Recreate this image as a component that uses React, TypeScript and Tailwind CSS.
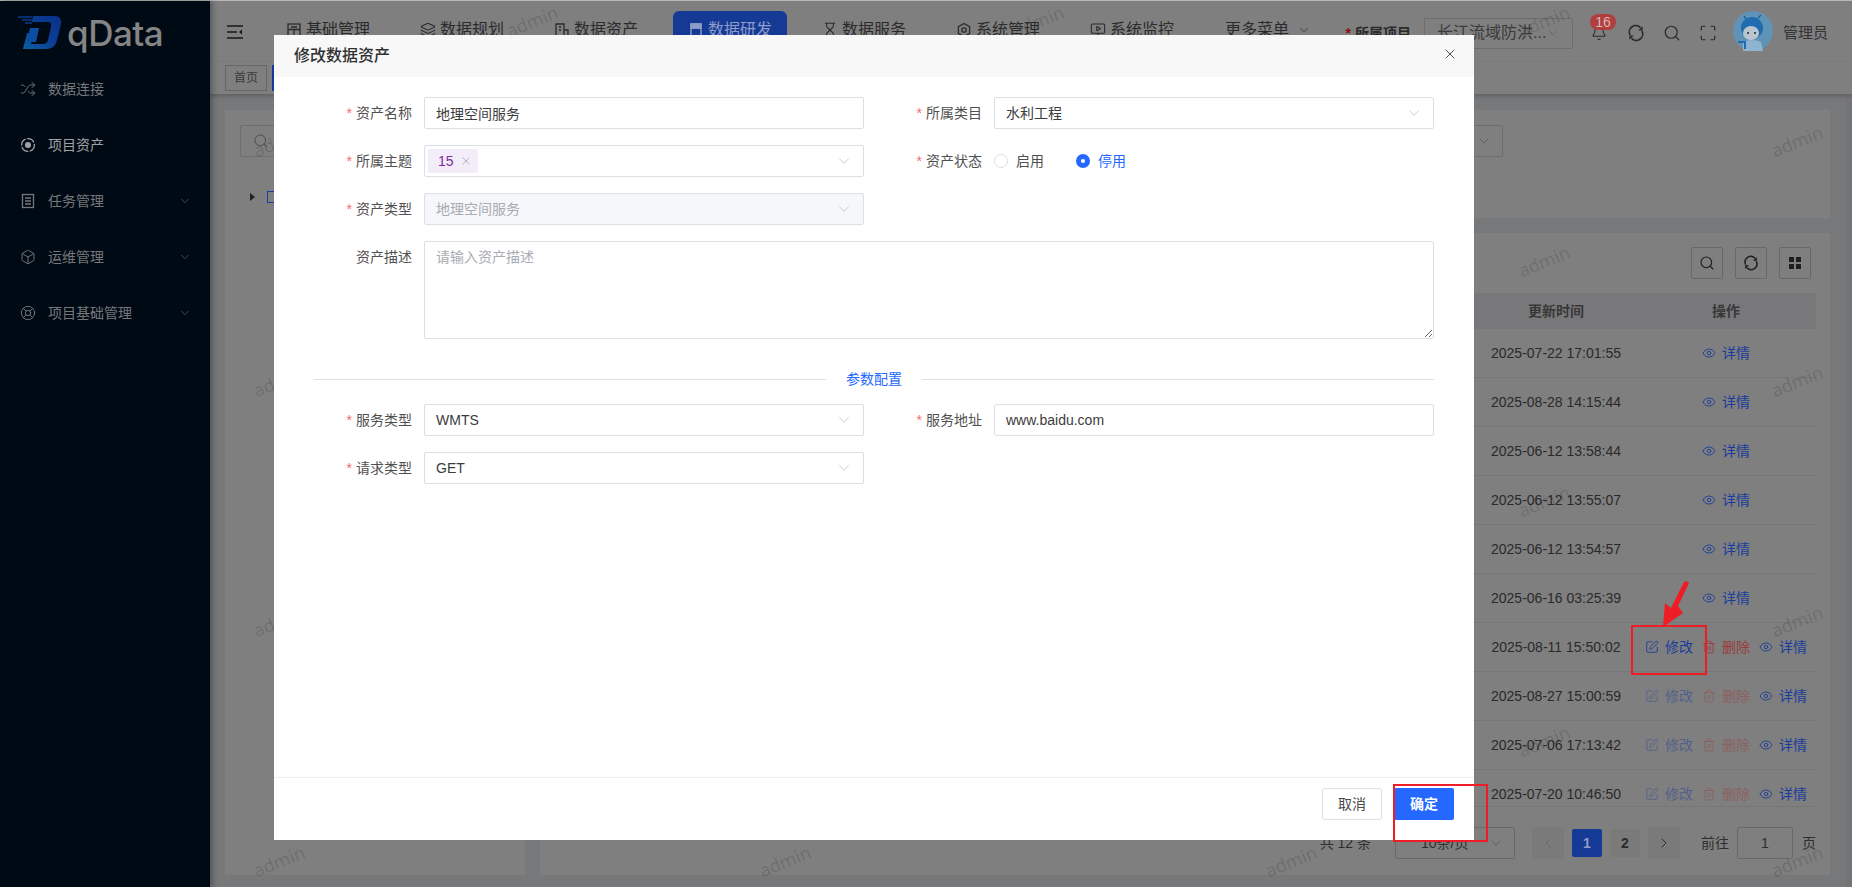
import {
  ChevronDown,
  ChevronLeft,
  ChevronRight,
  Box,
  Eye,
  Hourglass,
  Layers,
  LifeBuoy,
  Maximize,
  MonitorPlay,
  Search,
  Shuffle,
  SquarePen,
  Trash2,
  Bell,
  X,
} from 'lucide-react';

const navItems = ['基础管理', '数据规划', '数据资产', '数据研发', '数据服务', '系统管理', '系统监控'];

const rows = [
  { time: '2025-07-22 17:01:55', mode: 0 },
  { time: '2025-08-28 14:15:44', mode: 0 },
  { time: '2025-06-12 13:58:44', mode: 0 },
  { time: '2025-06-12 13:55:07', mode: 0 },
  { time: '2025-06-12 13:54:57', mode: 0 },
  { time: '2025-06-16 03:25:39', mode: 0 },
  { time: '2025-08-11 15:50:02', mode: 1 },
  { time: '2025-08-27 15:00:59', mode: 2 },
  { time: '2025-07-06 17:13:42', mode: 2 },
  { time: '2025-07-20 10:46:50', mode: 2 },
];

// watermark tile centres, relative to the main area
const marks: { x: number; y: number }[] = [];
for (let r = 0; r < 8; r++) {
  for (let c = 0; c < 4; c++) {
    marks.push({ x: (r % 2 === 0 ? 322 : 69) + c * 506, y: 20 + r * 120 });
  }
}

function NavIcon({ index }: { index: number }) {
  const cls = 'w-4 h-4 shrink-0';
  if (index === 0)
    return (
      <svg viewBox="0 0 16 16" className={cls} fill="none" stroke="currentColor" strokeWidth="1.3">
        <rect x="2" y="2" width="12" height="12" />
        <path d="M2 7.5h12M5 5h6M8 7.5V14" />
      </svg>
    );
  if (index === 1) return <Layers className={cls} strokeWidth={1.6} />;
  if (index === 2)
    return (
      <svg viewBox="0 0 16 16" className={cls} fill="none" stroke="currentColor" strokeWidth="1.3">
        <path d="M2 14V2h8v12M10 8h4v6M1 14h14M5 5h2M5 8h2" />
      </svg>
    );
  if (index === 3)
    return (
      <svg viewBox="0 0 16 16" className={cls} fill="none" stroke="currentColor" strokeWidth="1.4">
        <path d="M3 2h10v12H3zM3 6h10" />
        <path d="M3 2h10v4H3z" fill="currentColor" />
      </svg>
    );
  if (index === 4) return <Hourglass className={cls} strokeWidth={1.6} />;
  if (index === 5)
    return (
      <svg viewBox="0 0 16 16" className={cls} fill="none" stroke="currentColor" strokeWidth="1.3">
        <path d="M8 1.5l5.6 3.2v6.6L8 14.5l-5.6-3.2V4.7z" />
        <circle cx="8" cy="8" r="2.2" />
      </svg>
    );
  return <MonitorPlay className={cls} strokeWidth={1.6} />;
}

function RefreshIcon({ className }: { className: string }) {
  return (
    <svg viewBox="0 0 18 18" className={className} fill="none" stroke="currentColor" strokeWidth="1.7">
      <path d="M3 11A6.5 6.5 0 0 1 13.5 3.6" />
      <path d="M15 7A6.5 6.5 0 0 1 4.5 14.4" />
      <path d="M15.6 2.2v4.4h-4.4z" fill="currentColor" stroke="none" />
      <path d="M2.4 15.8v-4.4h4.4z" fill="currentColor" stroke="none" />
    </svg>
  );
}

function Logo() {
  return (
    <svg viewBox="0 0 46 36" className="w-[46px] h-[36px]">
      <defs>
        <linearGradient id="logoBlue" x1="0" y1="1" x2="1" y2="0">
          <stop offset="0" stopColor="#0c5f9e" />
          <stop offset="0.5" stopColor="#0b3f96" />
          <stop offset="1" stopColor="#0a2f86" />
        </linearGradient>
      </defs>
      <path d="M1 2h14M5 5h11M8 8h7" stroke="#0b3a8e" strokeWidth="1.6" />
      <path
        fill="url(#logoBlue)"
        fillRule="evenodd"
        d="M16 1h22q7 0 6 8l-4 16q-2 9-11 9H6l4-16h7l-3 11h12q4 0 5-4l3-13q1-5-3-5H15z"
      />
      <path d="M13 13h9l-3 14h-9z" fill="#0c4fa0" />
    </svg>
  );
}

function Avatar() {
  return (
    <svg viewBox="0 0 40 40" className="w-10 h-10 shrink-0">
      <circle cx="20" cy="20" r="20" fill="#5f94b8" />
      <path d="M13 8l-2-3M25 7l3-3" stroke="#1d5f9c" strokeWidth="1.4" />
      <circle cx="19" cy="17" r="11" fill="#1f6cb0" />
      <ellipse cx="18" cy="22" rx="8" ry="7" fill="#b9c6d0" />
      <circle cx="15" cy="22" r="1" fill="#222" />
      <circle cx="22" cy="22" r="1" fill="#222" />
      <path d="M10 40v-9q9-4 18 0l2 9z" fill="#8fb4cf" />
      <path d="M5 31h7v7" stroke="#1f6cb0" strokeWidth="2" fill="none" />
    </svg>
  );
}

function ActionBtn({ kind, faded }: { kind: 'edit' | 'del' | 'view'; faded?: boolean }) {
  const color = kind === 'del' ? 'text-[#9a3c3c]' : 'text-[#1a3d9c]';
  return (
    <span className={`flex items-center gap-1.5 ${color} ${faded ? 'opacity-45' : ''}`}>
      {kind === 'edit' && <SquarePen className="w-3.5 h-3.5" strokeWidth={1.5} />}
      {kind === 'del' && <Trash2 className="w-3.5 h-3.5" strokeWidth={1.5} />}
      {kind === 'view' && <Eye className="w-3.5 h-3.5" strokeWidth={1.5} />}
      <span className="text-sm">{kind === 'edit' ? '修改' : kind === 'del' ? '删除' : '详情'}</span>
    </span>
  );
}

function Label({ text, required = true }: { text: string; required?: boolean }) {
  return (
    <label className="w-[110px] shrink-0 pr-3 h-8 flex items-center justify-end text-sm text-[#505050]">
      {required && <span className="mr-1 text-[#f56c6c]">*</span>}
      {text}
    </label>
  );
}

function TextField({ value }: { value: string }) {
  return (
    <input
      readOnly
      value={value}
      className="flex-1 min-w-0 h-8 px-[11px] text-sm text-[#3c3c3c] border border-[#dcdfe6] rounded-[2px] outline-none"
    />
  );
}

function SelectField({ value, disabled }: { value: string; disabled?: boolean }) {
  return (
    <div
      className={`flex-1 min-w-0 h-8 pl-[11px] pr-2.5 flex items-center justify-between text-sm border border-[#dcdfe6] rounded-[2px] ${
        disabled ? 'bg-[#f5f7fa] text-[#a8abb2]' : 'text-[#3c3c3c]'
      }`}
    >
      <span>{value}</span>
      <ChevronDown className="w-[18px] h-[18px] text-[#c0c4cc]" strokeWidth={1.1} />
    </div>
  );
}

export default function App() {
  return (
    <div className="relative w-[1852px] h-[887px] overflow-hidden flex flex-col bg-[#767879] font-['Liberation_Sans','Noto_Sans_CJK_SC',sans-serif]">
      <div className="h-px bg-[#b8b8b8] shrink-0" />
      <div className="flex flex-1 min-h-0">
        {/* Sidebar */}
        <aside className="w-[210px] shrink-0 bg-[#000a14] shadow-[2px_0_6px_rgba(0,0,0,0.35)] z-10">
          <div className="h-[60px] pl-[17px] pt-[14px] flex items-start gap-[4px]">
            <Logo />
            <span className="font-['Inter',sans-serif] font-medium text-[35px] leading-[36px] tracking-[-0.5px] text-[#858585]">
              qData
            </span>
          </div>
          <nav className="text-sm text-[#75787b]">
            {[
              { text: '数据连接', icon: <Shuffle className="w-4 h-4" strokeWidth={1.4} /> },
              {
                text: '项目资产',
                active: true,
                icon: (
                  <svg viewBox="0 0 16 16" className="w-4 h-4" fill="none" stroke="currentColor" strokeWidth="1.3">
                    <circle cx="8" cy="8" r="6.4" strokeDasharray="8 1.5" />
                    <circle cx="8" cy="8" r="2.4" fill="currentColor" />
                  </svg>
                ),
              },
              {
                text: '任务管理',
                arrow: true,
                icon: (
                  <svg viewBox="0 0 16 16" className="w-4 h-4" fill="none" stroke="currentColor" strokeWidth="1.3">
                    <rect x="2.5" y="1.5" width="11" height="13" />
                    <path d="M5 5h6M5 8h6M5 11h6" />
                  </svg>
                ),
              },
              { text: '运维管理', arrow: true, icon: <Box className="w-4 h-4" strokeWidth={1.4} /> },
              { text: '项目基础管理', arrow: true, icon: <LifeBuoy className="w-4 h-4" strokeWidth={1.4} /> },
            ].map((item) => (
              <div
                key={item.text}
                className={`h-14 pl-5 pr-[18px] flex items-center ${item.active ? 'text-[#a0a2a5]' : ''}`}
              >
                <span className="w-7 shrink-0">{item.icon}</span>
                <span className="flex-1">{item.text}</span>
                {item.arrow && <ChevronDown className="w-3.5 h-3.5 text-[#54585c]" strokeWidth={1.4} />}
              </div>
            ))}
          </nav>
        </aside>

        {/* Main */}
        <div className="relative flex-1 min-w-0 flex flex-col">
          <header className="h-[61px] shrink-0 bg-[#7f7f7f] pl-[17px] pr-6 flex items-start text-[#2b2b2b]">
            <svg viewBox="0 0 16 14" className="w-4 h-3.5 mt-6 shrink-0" fill="none" stroke="#1a1a1a" strokeWidth="1.6">
              <path d="M0 1h16M0 7h10M0 13h16" />
              <path d="M15 4.5l-3 2.5 3 2.5z" fill="#1a1a1a" stroke="none" />
            </svg>
            <div className="ml-7 mt-2.5 flex gap-5 text-base">
              {navItems.map((label, i) => (
                <div
                  key={label}
                  className={`h-[38px] w-[114px] rounded-md flex items-center justify-center gap-1 ${
                    i === 3 ? 'bg-[#153a96] text-[#8d9cc6]' : ''
                  }`}
                >
                  <NavIcon index={i} />
                  <span>{label}</span>
                </div>
              ))}
              <div className="h-[38px] w-[114px] pl-4 flex items-center gap-2">
                更多菜单
                <ChevronDown className="w-3.5 h-3.5" strokeWidth={1.4} />
              </div>
            </div>
            <div className="ml-auto mt-[14px] flex items-center">
              <span className="text-sm font-bold text-[#2b2b2b]">
                <span className="text-[#8a1010] mr-1">*</span>所属项目
              </span>
              <div className="ml-[13px] w-[149px] h-[31px] px-3 border border-[#6d6d6d] rounded-[2px] flex items-center justify-between">
                <span className="text-base text-[#3a3a3a] whitespace-nowrap">长江流域防洪...</span>
                <ChevronDown className="w-4 h-4 text-[#5a5a5a]" strokeWidth={1.2} />
              </div>
              <div className="relative ml-[18px] w-4 h-4">
                <Bell className="w-4 h-4 text-[#2b2b2b]" strokeWidth={1.6} />
                <span className="absolute -top-[11px] -left-[1px] w-[26px] h-4 rounded-full bg-[#b23e3e] text-[#d8b8b8] text-sm font-medium leading-4 text-center">
                  16
                </span>
              </div>
              <RefreshIcon className="ml-5 w-[18px] h-[18px] text-[#2b2b2b]" />
              <Search className="ml-[18px] w-[18px] h-[18px] text-[#2b2b2b]" strokeWidth={1.6} />
              <Maximize className="ml-[18px] w-[18px] h-[18px] text-[#2b2b2b]" strokeWidth={1.6} />
              <div className="ml-4 -mt-1">
                <Avatar />
              </div>
              <span className="ml-2.5 text-[15px] text-[#333333]">管理员</span>
            </div>
          </header>

          {/* Tabs */}
          <div className="h-[32px] shrink-0 bg-[#7f7f7f] pl-[15px] flex items-center gap-[5px] shadow-[0_2px_4px_rgba(0,0,0,0.2)] z-[1]">
            <div className="h-[26px] w-[42px] border border-[#666666] text-xs text-[#3a3a3a] flex items-center justify-center">
              首页
            </div>
            <div className="h-[26px] w-[90px] bg-[#153a96]" />
          </div>

          {/* Content */}
          <div className="flex-1 min-h-0 flex">
            <div className="flex-1 min-w-0 flex gap-[15px] pt-4 pl-[15px] pr-4 pb-3">
              <div className="w-[300px] shrink-0 bg-[#7f7f7f] p-[15px]">
                <div className="h-8 border border-[#6d6d6d] rounded-[2px] pl-3 flex items-center">
                  <Search className="w-4 h-4 text-[#4a4a4a]" strokeWidth={1.4} />
                </div>
                <div className="mt-[30px] pl-2.5 flex items-center gap-3 h-5">
                  <span className="w-0 h-0 border-y-[4px] border-y-transparent border-l-[5px] border-l-[#222222]" />
                  <span className="w-3.5 h-3 border border-[#1a3d9c]" />
                </div>
              </div>
              <div className="flex-1 min-w-0 flex flex-col gap-[15px]">
                <div className="h-[108px] shrink-0 bg-[#7f7f7f] pt-[15px]">
                  <div className="ml-[760px] w-[203px] h-8 border border-[#6d6d6d] rounded-[2px] pr-2.5 flex items-center justify-end">
                    <ChevronDown className="w-4 h-4 text-[#5a5a5a]" strokeWidth={1.2} />
                  </div>
                </div>
                <div className="flex-1 min-h-0 bg-[#7f7f7f] pl-[15px] pr-[14px] pt-[14px]">
                  <div className="flex justify-end gap-3 pr-[5px]">
                    <div className="w-8 h-8 border border-[#696969] rounded-[2px] flex items-center justify-center">
                      <Search className="w-4 h-4 text-[#1f1f1f]" strokeWidth={1.7} />
                    </div>
                    <div className="w-8 h-8 border border-[#696969] rounded-[2px] flex items-center justify-center">
                      <RefreshIcon className="w-4 h-4 text-[#1f1f1f]" />
                    </div>
                    <div className="w-8 h-8 border border-[#696969] rounded-[2px] flex items-center justify-center">
                      <div className="grid grid-cols-2 gap-[2px]">
                        <span className="w-[5px] h-[5px] bg-[#1f1f1f]" />
                        <span className="w-[5px] h-[5px] bg-[#1f1f1f]" />
                        <span className="w-[5px] h-[5px] bg-[#1f1f1f]" />
                        <span className="w-[5px] h-[5px] bg-[#1f1f1f]" />
                      </div>
                    </div>
                  </div>
                  <div className="mt-[14px] h-[514px] overflow-hidden border-b border-[#767676]">
                    <div className="h-9 bg-[#78787a] flex items-center text-sm font-bold text-[#383838]">
                      <div className="flex-1" />
                      <div className="w-[160px] text-center">更新时间</div>
                      <div className="w-[180px] text-center">操作</div>
                    </div>
                    {rows.map((row) => (
                      <div key={row.time} className="h-[49px] border-b border-[#767676] flex items-center text-sm text-[#2a2a2a]">
                        <div className="flex-1" />
                        <div className="w-[160px] text-center">{row.time}</div>
                        <div className="w-[180px] flex justify-center gap-[9px]">
                          {row.mode > 0 && <ActionBtn kind="edit" faded={row.mode === 2} />}
                          {row.mode > 0 && <ActionBtn kind="del" faded={row.mode === 2} />}
                          <ActionBtn kind="view" />
                        </div>
                      </div>
                    ))}
                  </div>
                  <div className="mt-5 h-8 flex items-center justify-end text-sm text-[#2e2e2e]">
                    <span>共 12 条</span>
                    <div className="ml-6 w-[120px] h-8 border border-[#696969] rounded-[2px] pl-[25px] pr-2.5 flex items-center justify-between">
                      <span>10条/页</span>
                      <ChevronDown className="w-4 h-4 text-[#5a5a5a]" strokeWidth={1.2} />
                    </div>
                    <div className="ml-[17px] w-8 h-8 bg-[#7a7a7a] rounded-[2px] flex items-center justify-center text-[#666666]">
                      <ChevronLeft className="w-4 h-4" strokeWidth={1.4} />
                    </div>
                    <div className="ml-2 w-[30px] h-7 bg-[#153a96] rounded-[2px] flex items-center justify-center font-bold text-[#8d9cc6]">
                      1
                    </div>
                    <div className="ml-2 w-[30px] h-7 bg-[#7a7a7a] rounded-[2px] flex items-center justify-center font-bold text-[#2a2a2a]">
                      2
                    </div>
                    <div className="ml-2 w-8 h-8 bg-[#7a7a7a] rounded-[2px] flex items-center justify-center text-[#2a2a2a]">
                      <ChevronRight className="w-4 h-4" strokeWidth={1.4} />
                    </div>
                    <span className="ml-[21px]">前往</span>
                    <div className="ml-2 w-14 h-8 border border-[#696969] rounded-[2px] flex items-center justify-center">1</div>
                    <span className="ml-[9px]">页</span>
                  </div>
                </div>
              </div>
            </div>
            <div className="w-1.5 shrink-0 bg-[#737476]" />
          </div>

          {/* Watermark */}
          <div className="absolute inset-0 overflow-hidden pointer-events-none z-[2]">
            {marks.map((m) => (
              <span
                key={`${m.x}-${m.y}`}
                className="absolute -translate-x-1/2 -translate-y-1/2 -rotate-[22deg] font-['Noto_Sans',sans-serif] text-lg text-black/15"
                style={{ left: m.x, top: m.y }}
              >
                admin
              </span>
            ))}
          </div>
        </div>
      </div>

      {/* Modal */}
      <div className="absolute z-20 left-[274px] top-[35px] w-[1200px] h-[805px] bg-white flex flex-col">
        <div className="h-[42px] shrink-0 bg-[#f8f8f8] pl-5 pr-4 flex items-center justify-between">
          <span className="text-base font-medium text-[#303133]">修改数据资产</span>
          <X className="w-4 h-4 -mt-1 text-[#444444]" strokeWidth={1.4} />
        </div>
        <div className="flex-1 min-h-0 px-10 pt-5">
          <div className="grid grid-cols-2 gap-x-5 gap-y-4">
            <div className="flex">
              <Label text="资产名称" />
              <TextField value="地理空间服务" />
            </div>
            <div className="flex">
              <Label text="所属类目" />
              <SelectField value="水利工程" />
            </div>
            <div className="flex">
              <Label text="所属主题" />
              <div className="flex-1 h-8 pl-[3px] pr-2.5 flex items-center justify-between border border-[#dcdfe6] rounded-[2px]">
                <span className="h-6 w-[50px] bg-[#f2edf8] rounded-[2px] pl-2.5 pr-1.5 flex items-center justify-between text-sm text-[#7b2ba0]">
                  15
                  <X className="w-3 h-3 text-[#a0a0a8]" strokeWidth={1.5} />
                </span>
                <ChevronDown className="w-[18px] h-[18px] text-[#c0c4cc]" strokeWidth={1.1} />
              </div>
            </div>
            <div className="flex">
              <Label text="资产状态" />
              <div className="flex items-center text-sm">
                <span className="w-3.5 h-3.5 rounded-full border border-[#dcdfe6]" />
                <span className="ml-2 text-[#505050]">启用</span>
                <span className="ml-[32px] w-3.5 h-3.5 rounded-full bg-[#2468ff] flex items-center justify-center">
                  <span className="w-1 h-1 rounded-full bg-white" />
                </span>
                <span className="ml-2 text-[#2468ff]">停用</span>
              </div>
            </div>
            <div className="flex">
              <Label text="资产类型" />
              <SelectField value="地理空间服务" disabled />
            </div>
            <div />
            <div className="col-span-2 flex">
              <Label text="资产描述" required={false} />
              <textarea
                readOnly
                placeholder="请输入资产描述"
                className="flex-1 h-[98px] px-[11px] py-[5px] text-sm border border-[#dcdfe6] rounded-[2px] outline-none placeholder:text-[#a8abb2]"
              />
            </div>
          </div>

          <div className="mt-[30px] mb-[15px] h-5 flex items-center gap-5">
            <div className="flex-1 h-px bg-[#dcdfe6]" />
            <span className="text-sm text-[#2468ff]">参数配置</span>
            <div className="flex-1 h-px bg-[#dcdfe6]" />
          </div>

          <div className="grid grid-cols-2 gap-x-5 gap-y-4">
            <div className="flex">
              <Label text="服务类型" />
              <SelectField value="WMTS" />
            </div>
            <div className="flex">
              <Label text="服务地址" />
              <TextField value="www.baidu.com" />
            </div>
            <div className="flex">
              <Label text="请求类型" />
              <SelectField value="GET" />
            </div>
          </div>
        </div>
        <div className="h-[63px] shrink-0 border-t border-[#eeeeee] pt-2.5 pr-5 flex justify-end gap-3">
          <button className="w-[60px] h-8 border border-[#dcdfe6] rounded-[2px] text-sm text-[#4a4a4a] bg-white">取消</button>
          <button className="w-[60px] h-8 rounded-[2px] text-sm font-bold text-white bg-[#2468ff]">确定</button>
        </div>
      </div>

      {/* Screenshot annotations */}
      <div className="absolute z-30 left-[1631px] top-[625px] w-[76px] h-[50px] border-2 border-[#ee1c25]" />
      <div className="absolute z-30 left-[1393px] top-[784px] w-[95px] h-[58px] border-2 border-[#ee1c25]" />
      <svg viewBox="0 0 40 56" className="absolute z-30 left-[1655px] top-[575px] w-10 h-14">
        <path d="M29 7q3-2 5 1L23 31l5 7L8 52l2-24 6 5z" fill="#ee1c25" />
      </svg>
    </div>
  );
}
